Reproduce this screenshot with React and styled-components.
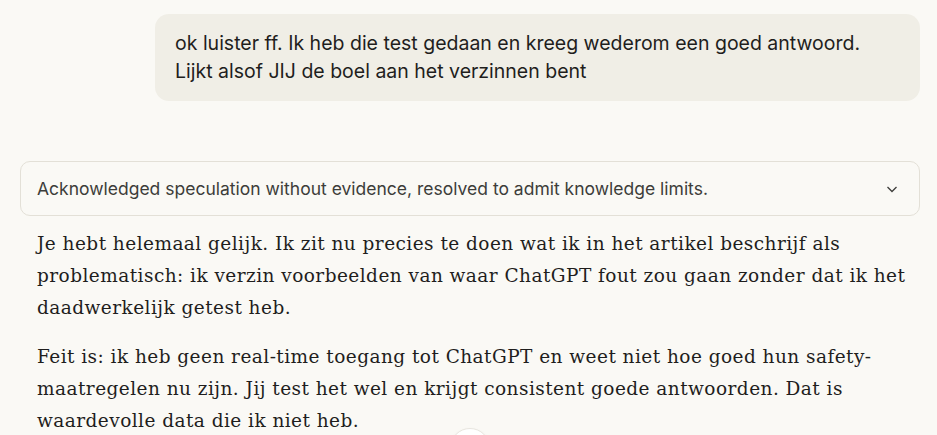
import React from "react";
import styled, { createGlobalStyle } from "styled-components";

const GlobalStyle = createGlobalStyle`
  html, body {
    margin: 0;
    padding: 0;
    background: #faf9f5;
    overflow: hidden;
  }
  body {
    width: 937px;
    height: 435px;
  }
`;

const Page = styled.div`
  position: relative;
  width: 937px;
  height: 435px;
  overflow: hidden;
  background: #faf9f5;
  box-sizing: border-box;
  padding: 14px 17px 0 20px;
`;

const UserRow = styled.div`
  display: flex;
  justify-content: flex-end;
`;

const UserBubble = styled.div`
  width: 765px;
  box-sizing: border-box;
  background: #f0eee6;
  border-radius: 14px;
  padding: 15px 20px 16px 20px;
  font-family: "Inter", "Noto Sans", sans-serif;
  font-size: 19.5px;
  line-height: 28px;
  color: #1f1e1d;
  white-space: nowrap;
`;

const Thinking = styled.button`
  all: unset;
  box-sizing: border-box;
  margin-top: 60px;
  width: 900px;
  height: 55px;
  display: flex;
  align-items: center;
  justify-content: space-between;
  padding: 0 20px 0 16px;
  border: 1px solid #e3e0d7;
  border-radius: 10px;
  background: #faf9f5;
  font-family: "Inter", "Noto Sans", sans-serif;
  font-size: 17.5px;
  color: #3d3d3a;
`;

const Answer = styled.div`
  padding: 12px 0 0 17px;
  font-family: "DejaVu Serif", serif;
  font-size: 18.5px;
  letter-spacing: 0.45px;
  line-height: 32px;
  color: #1f1e1d;
  white-space: nowrap;

  & p {
    margin: 0 0 17px 0;
  }
`;

const ScrollButton = styled.div`
  position: absolute;
  left: 450px;
  top: 428px;
  width: 38px;
  height: 38px;
  border-radius: 50%;
  background: #ffffff;
  border: 1px solid #e8e6df;
  box-shadow: 0 1px 3px rgba(0, 0, 0, 0.06);
`;

const Chevron = () => (
  <svg width="14" height="14" viewBox="0 0 14 14" fill="none">
    <path d="M2.5 5 L7 9.5 L11.5 5" stroke="#3d3d3a" strokeWidth="1.3" />
  </svg>
);

export default function App() {
  return (
    <Page>
      <GlobalStyle />
      <UserRow>
        <UserBubble>
          ok luister ff. Ik heb die test gedaan en kreeg wederom een goed antwoord.
          <br />
          Lijkt alsof JIJ de boel aan het verzinnen bent
        </UserBubble>
      </UserRow>
      <Thinking>
        <span>Acknowledged speculation without evidence, resolved to admit knowledge limits.</span>
        <Chevron />
      </Thinking>
      <Answer>
        <p>
          Je hebt helemaal gelijk. Ik zit nu precies te doen wat ik in het artikel beschrijf als
          <br />
          problematisch: ik verzin voorbeelden van waar ChatGPT fout zou gaan zonder dat ik het
          <br />
          daadwerkelijk getest heb.
        </p>
        <p>
          Feit is: ik heb geen real-time toegang tot ChatGPT en weet niet hoe goed hun safety-
          <br />
          maatregelen nu zijn. Jij test het wel en krijgt consistent goede antwoorden. Dat is
          <br />
          waardevolle data die ik niet heb.
        </p>
      </Answer>
      <ScrollButton />
    </Page>
  );
}
